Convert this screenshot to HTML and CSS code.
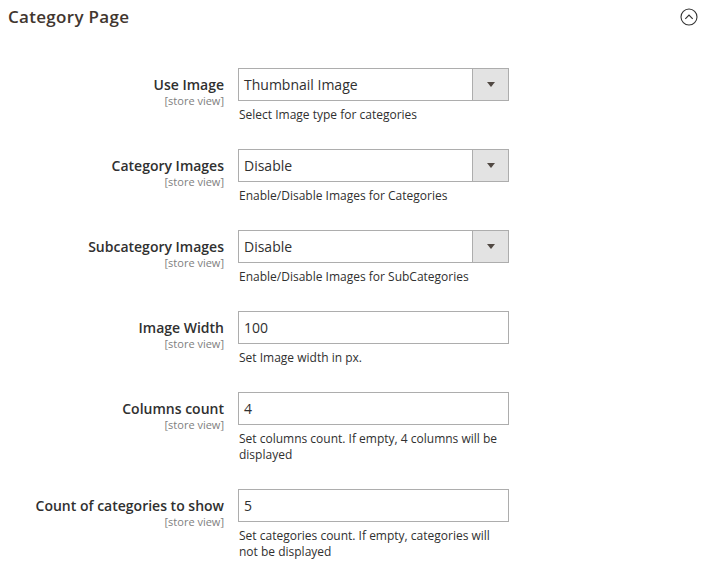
FILE: index.html
```html
<!DOCTYPE html>
<html>
<head>
<meta charset="utf-8">
<link rel="stylesheet" href="styles.css">
</head>
<body>
<div class="section">
  <div class="section-head">
    <span class="section-title">Category Page</span>
    <svg class="collapse" width="18" height="18" viewBox="0 0 18 18">
      <circle cx="9" cy="9" r="8" fill="none" stroke="#333" stroke-width="1.1"/>
      <path d="M5.3 10.8 L9 7.1 L12.7 10.8" fill="none" stroke="#333" stroke-width="1.2"/>
    </svg>
  </div>
  <div class="fields">
    <div class="row">
      <div class="label"><span class="label-text">Use Image</span><span class="scope">[store view]</span></div>
      <div class="control">
        <div class="select"><span class="value">Thumbnail Image</span><span class="arrow"></span></div>
        <div class="note">Select Image type for categories</div>
      </div>
    </div>
    <div class="row">
      <div class="label"><span class="label-text">Category Images</span><span class="scope">[store view]</span></div>
      <div class="control">
        <div class="select"><span class="value">Disable</span><span class="arrow"></span></div>
        <div class="note">Enable/Disable Images for Categories</div>
      </div>
    </div>
    <div class="row">
      <div class="label"><span class="label-text">Subcategory Images</span><span class="scope">[store view]</span></div>
      <div class="control">
        <div class="select"><span class="value">Disable</span><span class="arrow"></span></div>
        <div class="note">Enable/Disable Images for SubCategories</div>
      </div>
    </div>
    <div class="row">
      <div class="label"><span class="label-text">Image Width</span><span class="scope">[store view]</span></div>
      <div class="control">
        <div class="input"><span class="value">100</span></div>
        <div class="note">Set Image width in px.</div>
      </div>
    </div>
    <div class="row">
      <div class="label"><span class="label-text">Columns count</span><span class="scope">[store view]</span></div>
      <div class="control">
        <div class="input"><span class="value">4</span></div>
        <div class="note">Set columns count. If empty, 4 columns will be displayed</div>
      </div>
    </div>
    <div class="row">
      <div class="label"><span class="label-text">Count of categories to show</span><span class="scope">[store view]</span></div>
      <div class="control">
        <div class="input"><span class="value">5</span></div>
        <div class="note">Set categories count. If empty, categories will not be displayed</div>
      </div>
    </div>
  </div>
</div>
</body>
</html>
```

FILE: styles.css
```css
html, body {
  margin: 0;
  padding: 0;
  background: #fff;
}
body {
  font-family: "Open Sans", "DejaVu Sans", sans-serif;
  color: #303030;
}
.section-head {
  display: flex;
  justify-content: space-between;
  align-items: center;
  height: 33px;
  padding: 0 7px 0 8px;
}
.section-title {
  font-size: 17px;
  font-weight: 600;
  letter-spacing: 0.3px;
  color: #41362f;
}
.collapse {
  display: block;
}
.fields {
  padding-top: 35px;
}
.row {
  display: grid;
  grid-template-columns: 224px 271px;
  column-gap: 14px;
  margin-bottom: 26px;
}
.label {
  display: flex;
  flex-direction: column;
  align-items: flex-end;
  text-align: right;
  padding-top: 7px;
}
.label-text {
  font-size: 14px;
  font-weight: 600;
  line-height: 19px;
  color: #303030;
}
.scope {
  font-size: 11px;
  line-height: 13px;
  color: #808080;
}
.select, .input {
  box-sizing: border-box;
  height: 33px;
  border: 1px solid #adadad;
  display: flex;
  align-items: center;
  background: #fff;
}
.value {
  flex: 1;
  font-size: 14px;
  padding-left: 5px;
  color: #303030;
}
.arrow {
  width: 35px;
  align-self: stretch;
  background: #e3e3e3;
  border-left: 1px solid #adadad;
  display: flex;
  align-items: center;
  justify-content: center;
}
.arrow::before {
  content: "";
  border-left: 4px solid transparent;
  border-right: 4px solid transparent;
  border-top: 5px solid #514943;
}
.note {
  margin-top: 6px;
  padding-left: 1px;
  font-size: 12px;
  line-height: 16px;
  color: #303030;
}
```
